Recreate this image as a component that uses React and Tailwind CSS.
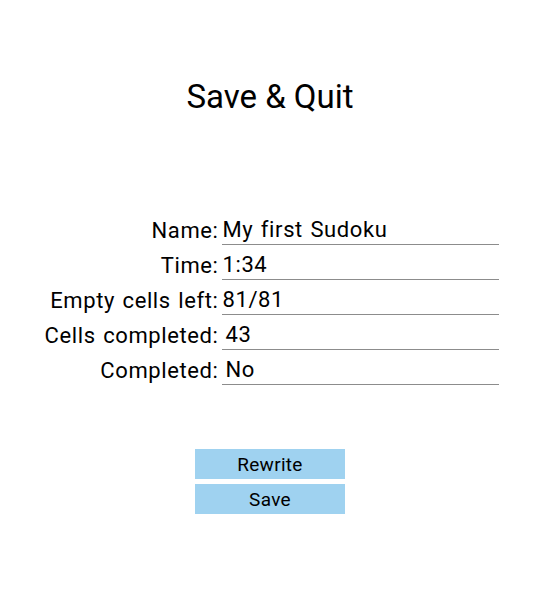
const rows = [
  { label: "Name:", value: "My first Sudoku", indent: false },
  { label: "Time:", value: "1:34", indent: false },
  { label: "Empty cells left:", value: "81/81", indent: false },
  { label: "Cells completed:", value: "43", indent: true },
  { label: "Completed:", value: "No", indent: true },
];

export default function App() {
  return (
    <div className="w-[540px] h-[600px] bg-white text-black font-['Roboto',sans-serif]">
      {/* Title */}
      <h1 className="pt-[80px] text-center text-[33px] leading-none">
        Save &amp; Quit
      </h1>

      {/* Summary */}
      <div className="mx-auto mt-[97px] w-[457px] flex flex-col text-[22px] tracking-[0.6px] [word-spacing:1.5px]">
        {rows.map((row) => (
          <div key={row.label} className="h-[35px] flex items-end gap-[3px]">
            <div className="w-[177px] shrink-0 text-right leading-[24px] pb-[2px] whitespace-nowrap">
              {row.label}
            </div>
            <div
              className={`flex-1 leading-[24px] pb-[2px] border-b border-[#8c8c8c] whitespace-nowrap ${
                row.indent ? "pl-[4px]" : "pl-[1px]"
              }`}
            >
              {row.value}
            </div>
          </div>
        ))}
      </div>

      {/* Actions */}
      <div className="mt-[64px] flex flex-col items-center gap-[5px]">
        <button className="w-[150px] h-[30px] bg-[#9fd2f0] text-[19px] tracking-[0.3px] leading-none">
          Rewrite
        </button>
        <button className="w-[150px] h-[30px] bg-[#9fd2f0] text-[19px] tracking-[0.3px] leading-none">
          Save
        </button>
      </div>
    </div>
  );
}
